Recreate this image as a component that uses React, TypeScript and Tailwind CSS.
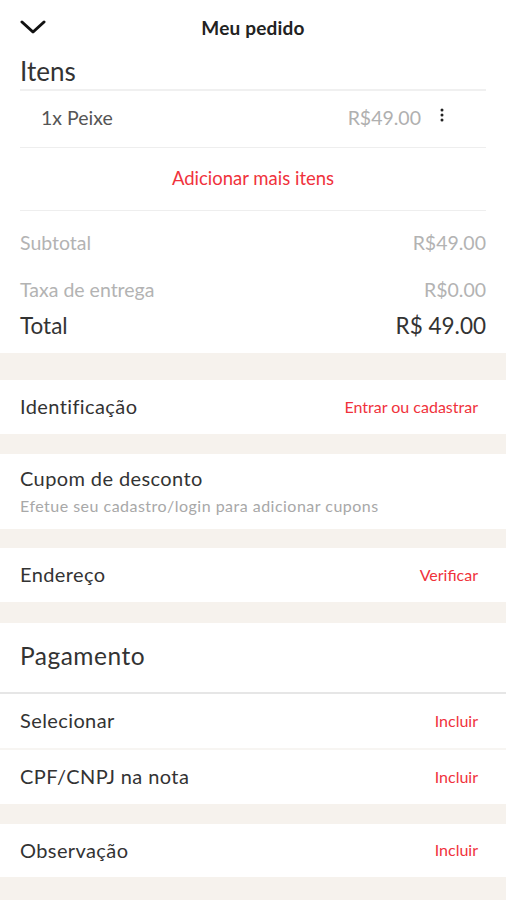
import React from 'react';

const RED = 'text-[#f0323c]';

const Band = ({ h }: { h: string }) => <div className={`bg-[#f6f2ed] ${h}`} />;

const ActionRow = ({ label, action, h = 'h-[54px]' }: { label: string; action: string; h?: string }) => (
  <div className={`flex items-center justify-between pl-5 pr-7 ${h}`}>
    <span className="text-[20px] tracking-[0.02em] text-[#333] -mt-[2px]">{label}</span>
    <span className={`text-[16px] ${RED} -mt-[1px]`}>{action}</span>
  </div>
);

const App: React.FC = () => {
  return (
    <div className="w-[506px] h-[900px] overflow-hidden bg-white font-['Lato',sans-serif]">
      {/* Header */}
      <div className="relative h-[56px] flex items-center justify-center">
        <svg className="absolute left-[20px] top-[20px]" width="26" height="14" viewBox="0 0 26 14" fill="none">
          <path d="M2 2 L13 12 L24 2" stroke="#111" strokeWidth="3" strokeLinecap="round" strokeLinejoin="round" />
        </svg>
        <span className="text-[19px] font-bold text-[#222] tracking-[0.01em]">Meu pedido</span>
      </div>

      {/* Items */}
      <div className="px-5">
        <div className="h-[35px] flex items-center text-[26px] text-[#333] -mt-[2px]">Itens</div>
        <div className="h-[2px] bg-[#f0f0f0]" />
        <div className="h-[56px] flex items-center pl-[21px]">
          <span className="flex-1 text-[19.5px] text-[#555] -mt-[3px]">1x Peixe</span>
          <span className="text-[19.5px] text-[#b0b0b0] -mt-[3px]">R$49.00</span>
          <svg className="ml-[19px] mr-[42px] -mt-[9px]" width="4" height="14" viewBox="0 0 4 14">
            <circle cx="2" cy="2" r="1.5" fill="#222" />
            <circle cx="2" cy="7" r="1.5" fill="#222" />
            <circle cx="2" cy="12" r="1.5" fill="#222" />
          </svg>
        </div>
        <div className="h-[1px] bg-[#eeeeee]" />
        <div className={`h-[62px] flex items-center justify-center text-[18.5px] ${RED}`}>Adicionar mais itens</div>
        <div className="h-[1px] bg-[#eeeeee]" />

        {/* Totals */}
        <div className="flex flex-col pt-[20px]">
          <div className="flex justify-between text-[19.5px] text-[#b3b3b3] h-[24px] items-center">
            <span>Subtotal</span>
            <span>R$49.00</span>
          </div>
          <div className="flex justify-between text-[19.5px] text-[#b3b3b3] h-[24px] items-center mt-[23px]">
            <span>Taxa de entrega</span>
            <span>R$0.00</span>
          </div>
          <div className="flex justify-between text-[22.5px] text-[#333] h-[28px] items-center mt-[10px]">
            <span>Total</span>
            <span>R$ 49.00</span>
          </div>
        </div>
      </div>
      <div className="h-[13px]" />

      <Band h="h-[27px]" />
      <ActionRow label="Identificação" action="Entrar ou cadastrar" />
      <Band h="h-[20px]" />

      <div className="h-[75px] flex flex-col justify-center pl-5">
        <span className="text-[20px] tracking-[0.02em] text-[#333] -mt-[3px]">Cupom de desconto</span>
        <span className="text-[16px] tracking-[0.03em] text-[#a8a8a8] mt-[1px]">Efetue seu cadastro/login para adicionar cupons</span>
      </div>
      <Band h="h-[19px]" />
      <ActionRow label="Endereço" action="Verificar" />
      <Band h="h-[21px]" />

      {/* Payment */}
      <div className="h-[69px] flex items-center pl-5 text-[24.5px] tracking-[0.02em] text-[#333]">
        <span className="-mt-[2px]">Pagamento</span>
      </div>
      <div className="h-[2px] bg-[#e6e6e6]" />
      <ActionRow label="Selecionar" action="Incluir" />
      <div className="h-[2px] bg-[#f7f5f2]" />
      <ActionRow label="CPF/CNPJ na nota" action="Incluir" />
      <Band h="h-[20px]" />
      <ActionRow label="Observação" action="Incluir" h="h-[53px]" />
      <Band h="h-[30px]" />
    </div>
  );
};

export default App;
